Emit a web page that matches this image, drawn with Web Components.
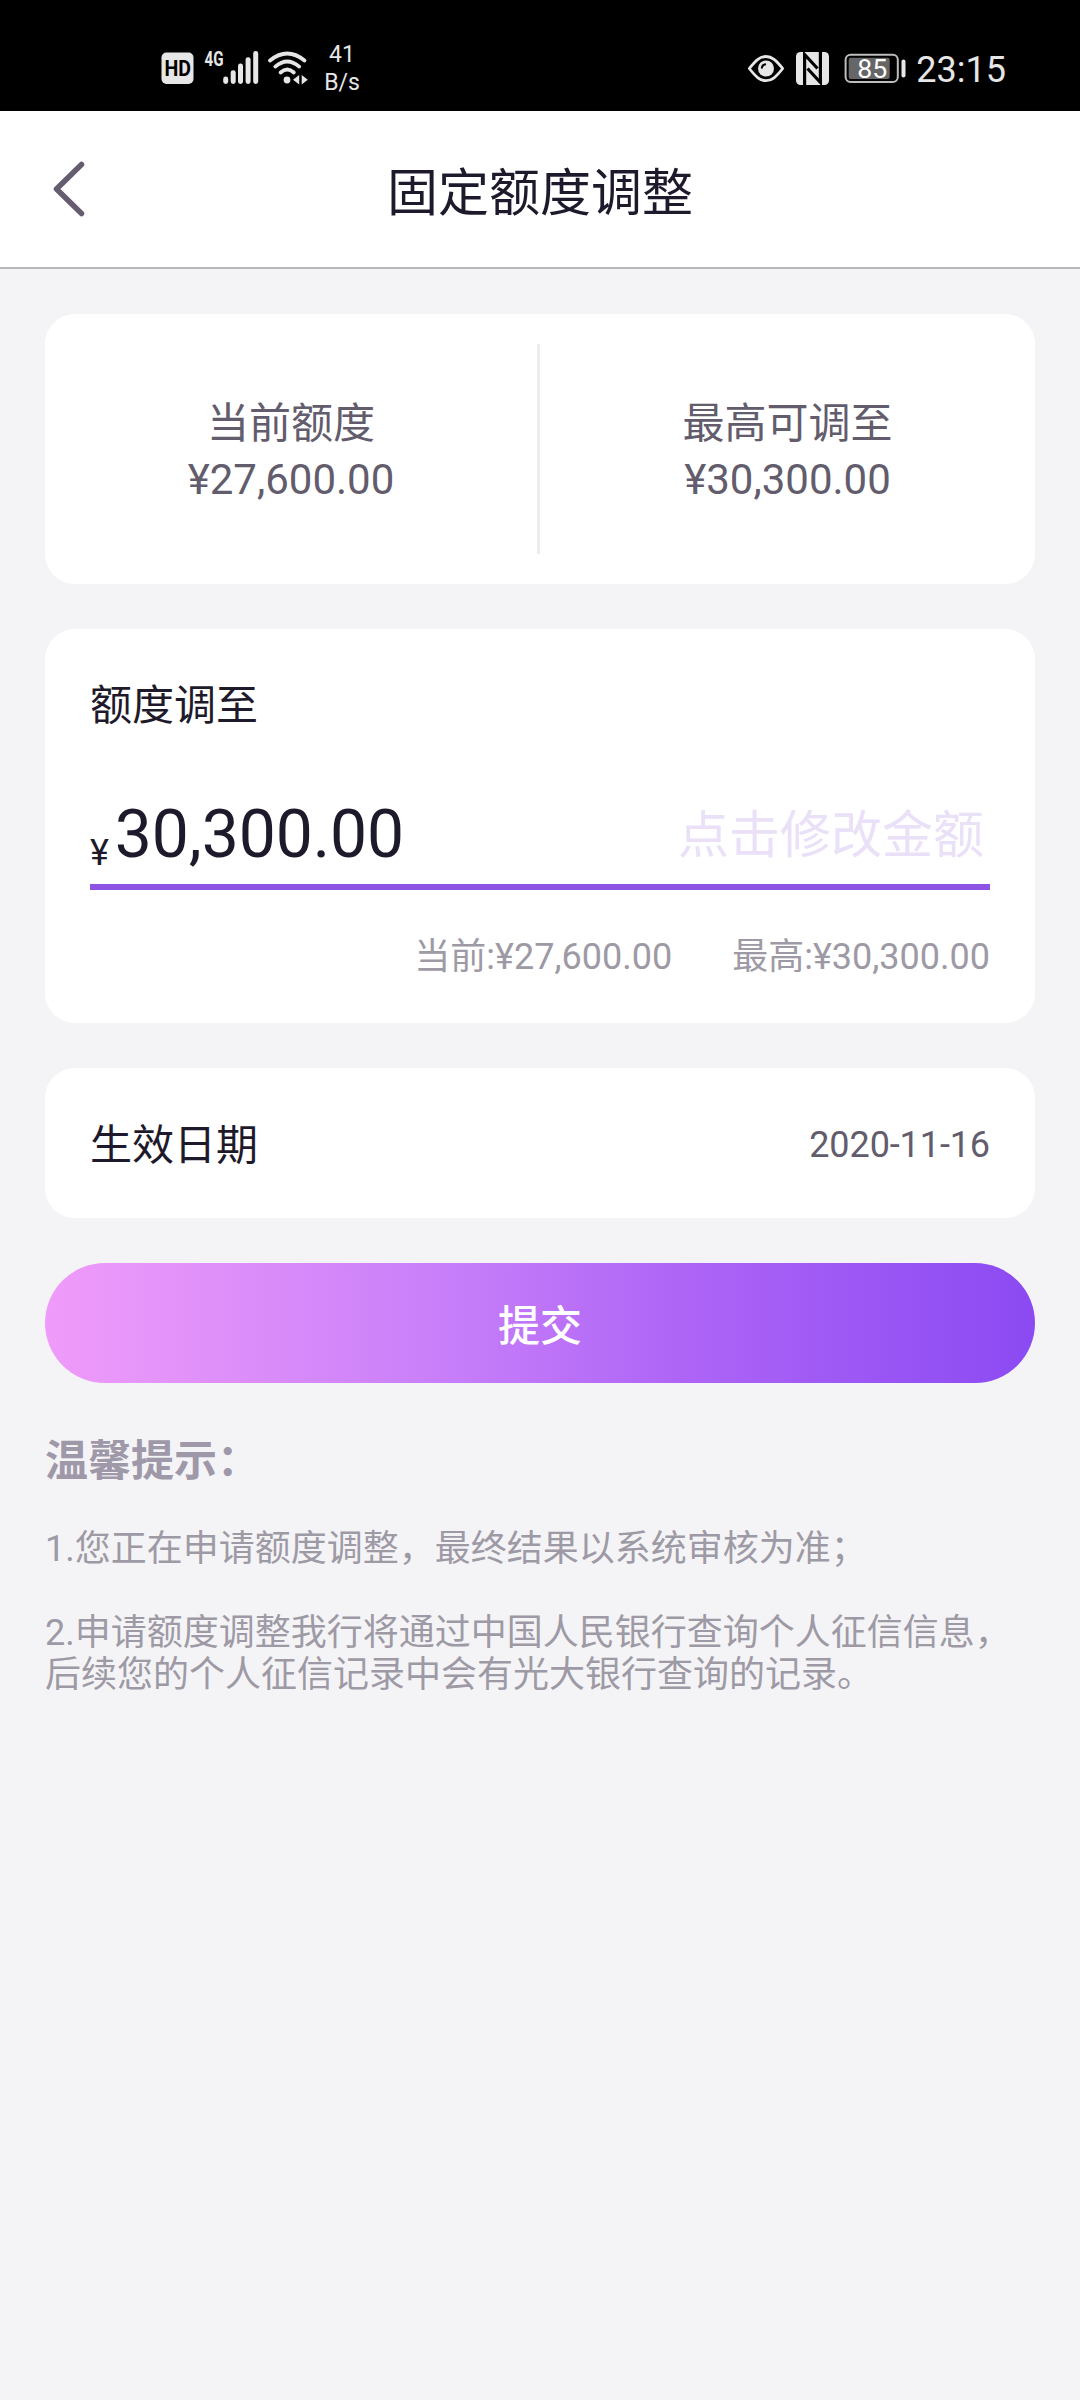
<!DOCTYPE html>
<html lang="zh-CN">
<head>
<meta charset="utf-8">
<title>固定额度调整</title>
<style>
  html, body { margin: 0; padding: 0; }
  body {
    background: #f4f4f7;
    font-family: Roboto, "Noto Sans CJK SC", sans-serif;
    color: #1f1a2b;
    min-height: 2400px;
    --muted: #625c6c;
    --faint: #9e9aa5;
    --accent: #8e54e3;
  }
</style>
</head>
<body>
<quota-page></quota-page>
<script>
const define = (name, html) => {
  const template = document.createElement('template');
  template.innerHTML = html;
  customElements.define(name, class extends HTMLElement {
    constructor() {
      super();
      this.attachShadow({ mode: 'open' }).append(template.content.cloneNode(true));
    }
  });
};

define('status-bar', `
<style>
  :host { display: flex; justify-content: space-between; align-items: flex-start; height: 111px; background: #000; color: #e6e6e6; box-sizing: border-box; }
  .left { display: flex; padding-left: 160px; }
  .right { display: flex; padding-right: 74px; }
  svg { display: block; height: 111px; }
  .speed { width: 38px; padding-top: 41px; text-align: center; font-size: 23px; line-height: 28px; white-space: nowrap; }
  .time { font-size: 36px; line-height: 42px; padding-top: 49px; width: 90px; white-space: nowrap; text-align: right; }
  text { font-family: Roboto, sans-serif; }
</style>
<div class="left">
  <svg width="163" viewBox="160 0 163 111" fill="#e6e6e6">
    <rect x="161.5" y="52.5" width="32" height="31.5" rx="5"/>
    <text x="164.5" y="76" font-size="21.500" font-weight="700" fill="#000" textLength="26.500" lengthAdjust="spacingAndGlyphs">HD</text>
    <text x="204.5" y="66" font-size="21" font-weight="700" textLength="19" lengthAdjust="spacingAndGlyphs">4G</text>
    <rect x="223.2" y="76.5" width="5" height="7.5" rx="2.4"/>
    <rect x="230.7" y="70.2" width="5" height="13.8" rx="2.4"/>
    <rect x="238" y="63.5" width="5" height="20.5" rx="2.4"/>
    <rect x="245.6" y="57.2" width="5" height="26.8" rx="2.4"/>
    <rect x="253.2" y="51" width="5" height="33" rx="2.4"/>
    <g fill="none" stroke="#e6e6e6" stroke-width="3.8" stroke-linecap="round">
      <path d="M270 60.500Q287.200 46.500 304.500 60.500"/>
      <path d="M275.300 66.600Q287.200 56.500 299.200 66.600"/>
      <path d="M280.600 72.500Q287.200 66.500 293.800 72.500"/>
    </g>
    <circle cx="287" cy="80" r="3.4"/>
    <path d="M299.200 75V84.500L293 79.800ZM301.700 75V84.500L307.800 79.800Z"/>
  </svg>
  <div class="speed">41<br>B/s</div>
</div>
<div class="right">
  <svg width="169" viewBox="747 0 169 111" fill="#e6e6e6">
    <path d="M749.300 68.500C756 60 760 56.500 766 56.500S776 60 782.700 68.500C776 77 772 80.700 766 80.700S756 77 749.300 68.500Z" fill="none" stroke="#e6e6e6" stroke-width="2.800" stroke-linejoin="round"/>
    <circle cx="766" cy="68.500" r="8"/>
    <path d="M761.800 68.500Q762 64.600 766 64.200" fill="none" stroke="#000" stroke-width="2"/>
    <rect x="796" y="52" width="33" height="33" rx="4.500"/>
    <path d="M804.600 86V54.500L817.500 68.500" fill="none" stroke="#000" stroke-width="3.200"/>
    <path d="M820.400 51V82.500L807.500 68.500" fill="none" stroke="#000" stroke-width="3.200"/>
    <rect x="845.600" y="54.700" width="52.200" height="27.300" rx="5" fill="none" stroke="#bdbdbd" stroke-width="2"/>
    <rect x="848.700" y="57.800" width="41" height="21.200" rx="2" fill="#666"/>
    <rect x="901.500" y="59.500" width="4" height="18" rx="2"/>
    <text x="857.300" y="77.700" font-size="26" fill="#fff" textLength="30" lengthAdjust="spacingAndGlyphs">85</text>
  </svg>
  <div class="time">23:15</div>
</div>`);

define('nav-bar', `
<style>
  :host { display: grid; grid-template-columns: 120px 1fr 120px; align-items: center; height: 158px; box-sizing: border-box; background: #fff; border-bottom: 2px solid #b8b8ba; }
  svg { display: block; margin-left: 48px; }
  .title { text-align: center; font-size: 51px; line-height: 60px; padding-top: 9px; }
</style>
<svg width="42" height="60" viewBox="48 159 42 60" fill="none" stroke="#655c70" stroke-width="5.500" stroke-linecap="round" stroke-linejoin="round"><path d="M81.500 164.500L56.500 189L81.500 213.500"/></svg>
<div class="title"><slot></slot></div>`);

define('app-card', `
<style>
  :host { display: block; background: #fff; border-radius: 30px; box-sizing: border-box; }
</style>
<slot></slot>`);

define('quota-figure', `
<style>
  :host { display: flex; flex-direction: column; align-items: center; flex: 1; padding-top: 52px; color: var(--muted); font-size: 42px; line-height: 56px; }
</style>
<slot name="label"></slot><slot></slot>`);

define('amount-field', `
<style>
  :host { display: flex; align-items: center; justify-content: space-between; height: 99px; border-bottom: 6px solid var(--accent); padding-right: 6px; }
  .value { display: flex; align-items: center; font-size: 66px; line-height: 78px; letter-spacing: -0.1px; }
  .unit { font-size: 36px; line-height: 42px; padding-top: 36px; margin-right: 6px; }
  .hint { font-size: 51px; line-height: 60px; padding-top: 2px; color: #eae0f8; }
</style>
<div class="value"><span class="unit">¥</span><slot></slot></div>
<div class="hint"><slot name="hint"></slot></div>`);

define('submit-button', `
<style>
  :host { display: block; }
  button { display: flex; align-items: center; justify-content: center; width: 100%; height: 120px; padding: 8px 0 0; border: 0; border-radius: 60px; font: 500 42px/50px Roboto, "Noto Sans CJK SC", sans-serif; color: #fff; background: linear-gradient(90deg, #ef9bfa 0%, #e292f9 14%, #c67df9 42%, #ac63f6 66%, #8b4af2 100%); }
</style>
<button><slot></slot></button>`);

define('tip-list', `
<style>
  :host { display: flex; flex-direction: column; gap: 42px; color: var(--faint); font-size: 36px; line-height: 42px; }
  .title { font-size: 43px; line-height: 50px; font-weight: 700; color: #9f98a9; }
</style>
<div class="title"><slot name="title"></slot></div>
<slot></slot>`);

define('quota-page', `
<style>
  :host { display: block; }
  main { display: flex; flex-direction: column; gap: 45px; padding: 45px 45px 0; }
  .summary { display: flex; height: 270px; padding: 30px 0; }
  .summary quota-figure:first-child { flex: 0 0 492px; }
  .rule { width: 3px; background: #ededf0; }
  .edit { height: 394px; padding: 47px 45px 0; display: flex; flex-direction: column; }
  .heading { font-size: 42px; line-height: 60px; margin-bottom: 49px; }
  .notes { display: flex; justify-content: flex-end; gap: 60px; margin-top: 46px; font-size: 36px; line-height: 42px; color: var(--faint); }
  .date { display: flex; justify-content: space-between; align-items: center; height: 150px; padding: 4px 45px 0; font-size: 42px; line-height: 60px; }
  .date .name { padding-top: 2px; }
  .date .day { font-size: 36px; color: var(--muted); letter-spacing: -0.1px; }
  tip-list { margin-top: 8px; }
</style>
<status-bar></status-bar>
<nav-bar>固定额度调整</nav-bar>
<main>
  <app-card class="summary">
    <quota-figure><span slot="label">当前额度</span><span>¥27,600.00</span></quota-figure>
    <div class="rule"></div>
    <quota-figure><span slot="label">最高可调至</span><span>¥30,300.00</span></quota-figure>
  </app-card>
  <app-card class="edit">
    <div class="heading">额度调至</div>
    <amount-field>30,300.00<span slot="hint">点击修改金额</span></amount-field>
    <div class="notes"><span>当前:¥27,600.00</span><span>最高:¥30,300.00</span></div>
  </app-card>
  <app-card class="date"><span class="name">生效日期</span><span class="day">2020-11-16</span></app-card>
  <submit-button>提交</submit-button>
  <tip-list>
    <span slot="title">温馨提示：</span>
    <div>1.您正在申请额度调整，最终结果以系统审核为准；</div>
    <div>2.申请额度调整我行将通过中国人民银行查询个人征信信息，<br>后续您的个人征信记录中会有光大银行查询的记录。</div>
  </tip-list>
</main>`);
</script>
</body>
</html>
